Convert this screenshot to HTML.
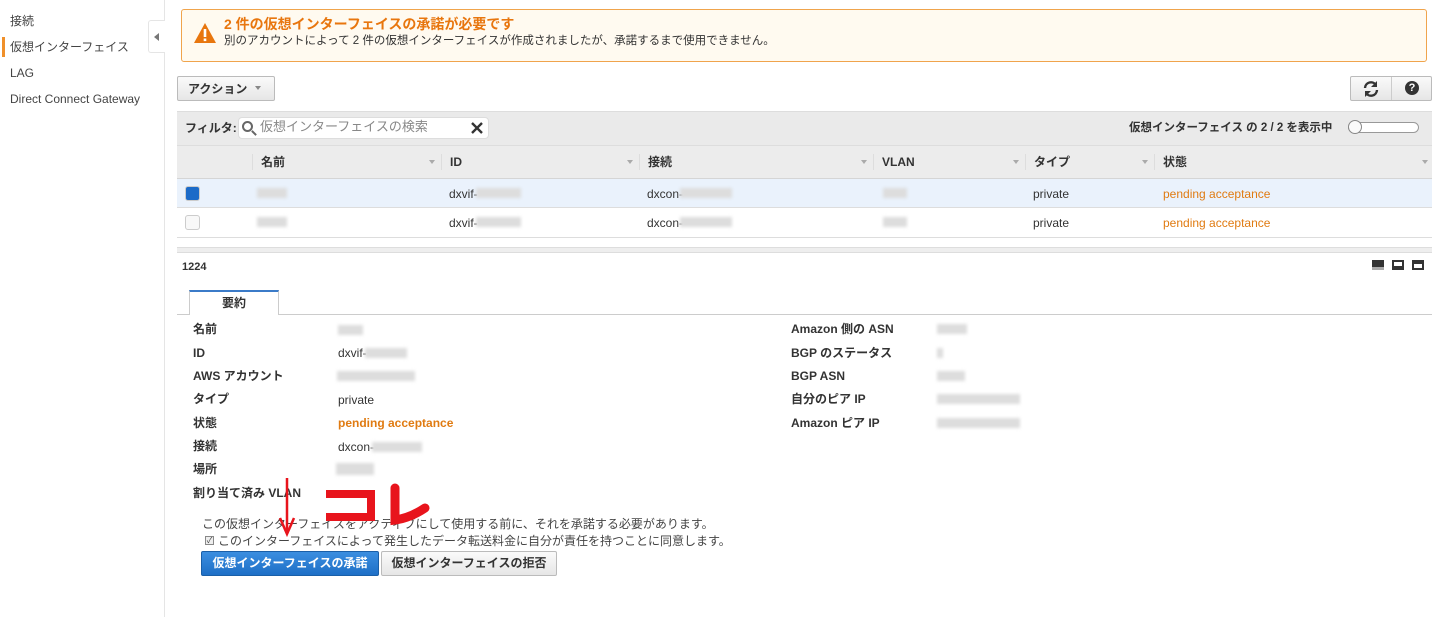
<!DOCTYPE html><html><head><meta charset="utf-8"><style>
*{box-sizing:border-box;margin:0;padding:0}
body{width:1440px;height:617px;background:#fff;font-family:"Liberation Sans","Noto Sans CJK JP",sans-serif;font-size:12px;line-height:14px;color:#444;position:relative;overflow:hidden}
.a{position:absolute;line-height:14px}
.nav{font-size:12px;color:#444}
.b{font-weight:bold;color:#333}
.blur{position:absolute;background:#ddd;height:10px;filter:blur(1.5px)}
.hd{color:#333;font-weight:bold}
.caret{position:absolute;width:0;height:0;border-left:3px solid transparent;border-right:3px solid transparent;border-top:4px solid #aaa}
.sep{position:absolute;width:1px;height:16px;background:#ddd;top:154px}
.or{color:#e07b12}
.btn{position:absolute;border:1px solid #bbb;border-radius:2px;background:linear-gradient(#fafafa,#e6e6e6)}
</style></head><body>
<div class="a" style="left:164px;top:0;width:1px;height:617px;background:#e5e5e5"></div>
<div class="a nav" style="left:10px;top:14px">接続</div>
<div class="a" style="left:2px;top:37px;width:3px;height:20px;background:#f0902a"></div>
<div class="a nav" style="left:10px;top:40px">仮想インターフェイス</div>
<div class="a nav" style="left:10px;top:66px">LAG</div>
<div class="a nav" style="left:10px;top:92px">Direct Connect Gateway</div>
<div class="a" style="left:148px;top:20px;width:17px;height:33px;border:1px solid #e5e5e5;border-right:none;border-radius:3px 0 0 3px;background:#fff"></div>
<div class="a" style="left:154px;top:33px;border-top:4px solid transparent;border-bottom:4px solid transparent;border-right:5px solid #777"></div>

<div class="a" style="left:181px;top:9px;width:1246px;height:53px;border:1px solid #f0a44c;border-radius:3px;background:#fffaf0"></div>
<svg class="a" style="left:193px;top:22px" width="24" height="22"><path d="M12 1L23 21H1Z" fill="#e8760e"/><rect x="10.7" y="7" width="2.6" height="8" fill="#fff"/><rect x="10.7" y="16.5" width="2.6" height="2.6" fill="#fff"/></svg>
<div class="a" style="left:224px;top:16px;font-size:14px;line-height:16px;font-weight:bold;color:#e8760e">2 件の仮想インターフェイスの承諾が必要です</div>
<div class="a" style="left:224px;top:34px;font-size:11.5px;color:#333">別のアカウントによって 2 件の仮想インターフェイスが作成されましたが、承諾するまで使用できません。</div>

<div class="btn" style="left:177px;top:76px;width:98px;height:25px"></div>
<div class="a b" style="left:188px;top:82px">アクション</div>
<div class="caret" style="left:255px;top:86px;border-top-color:#888"></div>
<div class="btn" style="left:1350px;top:76px;width:82px;height:25px"></div>
<div class="a" style="left:1391px;top:77px;width:1px;height:23px;background:#ccc"></div>
<svg class="a" style="left:1362px;top:80px" width="18" height="18" viewBox="0 0 18 18"><path d="M3 8A6 6 0 0 1 14 5" stroke="#333" stroke-width="2.4" fill="none"/><path d="M15 1V7H9Z" fill="#333"/><path d="M15 10A6 6 0 0 1 4 13" stroke="#333" stroke-width="2.4" fill="none"/><path d="M3 17V11H9Z" fill="#333"/></svg>
<div class="a" style="left:1405px;top:81px;width:14px;height:14px;border-radius:50%;background:#333;color:#fff;font-size:11px;font-weight:bold;text-align:center;line-height:14px">?</div>

<div class="a" style="left:177px;top:111px;width:1255px;height:34px;background:#eaeaea;border-top:1px solid #ddd"></div>
<div class="a b" style="left:185px;top:121px">フィルタ:</div>
<div class="a" style="left:238px;top:117px;width:251px;height:22px;background:#fff;border:1px solid #ddd;border-radius:4px"></div>
<div class="a" style="left:242px;top:121px;width:11px;height:11px;border:2px solid #666;border-radius:50%"></div>
<div class="a" style="left:251px;top:132px;width:6px;height:2px;background:#666;transform:rotate(45deg)"></div>
<div class="a" style="left:260px;top:120px;font-size:13px;color:#888">仮想インターフェイスの検索</div>
<svg class="a" style="left:471px;top:122px" width="12" height="12"><path d="M1 1L11 11M11 1L1 11" stroke="#333" stroke-width="2.4"/></svg>
<div class="a b" style="left:1129px;top:121px;font-size:11.5px">仮想インターフェイス の 2 / 2 を表示中</div>
<div class="a" style="left:1348px;top:122px;width:71px;height:11px;border:1px solid #999;border-radius:6px;background:#fff"></div>
<div class="a" style="left:1348px;top:120px;width:14px;height:14px;border:1px solid #888;border-radius:50%;background:#fafafa"></div>

<div class="a" style="left:177px;top:145px;width:1255px;height:34px;background:#ececec;border-top:1px solid #ddd;border-bottom:1px solid #d5d5d5"></div>
<div class="sep" style="left:252px"></div><div class="sep" style="left:441px"></div><div class="sep" style="left:639px"></div><div class="sep" style="left:873px"></div><div class="sep" style="left:1025px"></div><div class="sep" style="left:1154px"></div>
<div class="a hd" style="left:261px;top:155px">名前</div>
<div class="a hd" style="left:450px;top:155px">ID</div>
<div class="a hd" style="left:648px;top:155px">接続</div>
<div class="a hd" style="left:882px;top:155px">VLAN</div>
<div class="a hd" style="left:1034px;top:155px">タイプ</div>
<div class="a hd" style="left:1163px;top:155px">状態</div>
<div class="caret" style="left:429px;top:160px"></div><div class="caret" style="left:627px;top:160px"></div><div class="caret" style="left:861px;top:160px"></div><div class="caret" style="left:1013px;top:160px"></div><div class="caret" style="left:1142px;top:160px"></div><div class="caret" style="left:1422px;top:160px"></div>

<div class="a" style="left:177px;top:179px;width:1255px;height:29px;background:#eaf2fc;border-bottom:1px solid #ddd"></div>
<div class="a" style="left:177px;top:208px;width:1255px;height:30px;border-bottom:1px solid #ddd"></div>
<div class="a" style="left:185px;top:186px;width:15px;height:15px;border-radius:3px;background:#1c6bc8;border:1px solid #ccc"></div>
<div class="a" style="left:185px;top:215px;width:15px;height:15px;border-radius:3px;background:#f8f8f8;border:1px solid #ccc"></div>
<div class="blur" style="left:257px;top:188px;width:30px"></div><div class="blur" style="left:257px;top:217px;width:30px"></div>
<div class="a" style="left:449px;top:187px;color:#333">dxvif-</div><div class="blur" style="left:476px;top:188px;width:45px"></div>
<div class="a" style="left:449px;top:216px;color:#333">dxvif-</div><div class="blur" style="left:476px;top:217px;width:45px"></div>
<div class="a" style="left:647px;top:187px;color:#333">dxcon-</div><div class="blur" style="left:680px;top:188px;width:52px"></div>
<div class="a" style="left:647px;top:216px;color:#333">dxcon-</div><div class="blur" style="left:680px;top:217px;width:52px"></div>
<div class="blur" style="left:883px;top:188px;width:24px"></div><div class="blur" style="left:883px;top:217px;width:24px"></div>
<div class="a" style="left:1033px;top:187px;color:#333">private</div><div class="a" style="left:1033px;top:216px;color:#333">private</div>
<div class="a or" style="left:1163px;top:187px">pending acceptance</div><div class="a or" style="left:1163px;top:216px">pending acceptance</div>

<div class="a" style="left:177px;top:247px;width:1255px;height:6px;background:#eee;border-top:1px solid #ddd;border-bottom:1px solid #ddd"></div>
<div class="a b" style="left:182px;top:260px;font-size:11px">1224</div>
<div class="a" style="left:1372px;top:260px;width:12px;height:10px;background:#333;border-bottom:3px solid #aaa"></div>
<div class="a" style="left:1392px;top:260px;width:12px;height:10px;border:2px solid #333;border-bottom-width:4px;background:#fff"></div>
<div class="a" style="left:1412px;top:260px;width:12px;height:10px;border:2px solid #333;border-top-width:4px;background:#fff"></div>

<div class="a" style="left:177px;top:314px;width:1255px;height:1px;background:#ccc"></div>
<div class="a" style="left:189px;top:290px;width:90px;height:25px;border:1px solid #ccc;border-top:2px solid #3b7bc8;border-bottom:none;background:#fff"></div>
<div class="a b" style="left:222px;top:296px">要約</div>

<div class="a b" style="left:193px;top:322px">名前</div><div class="blur" style="left:338px;top:325px;width:25px"></div>
<div class="a b" style="left:193px;top:346px">ID</div><div class="a" style="left:338px;top:346px;color:#333">dxvif-</div><div class="blur" style="left:365px;top:348px;width:42px"></div>
<div class="a b" style="left:193px;top:369px">AWS アカウント</div><div class="blur" style="left:337px;top:371px;width:78px"></div>
<div class="a b" style="left:193px;top:392px">タイプ</div><div class="a" style="left:338px;top:393px;color:#333">private</div>
<div class="a b" style="left:193px;top:416px">状態</div><div class="a or" style="left:338px;top:416px;font-weight:bold">pending acceptance</div>
<div class="a b" style="left:193px;top:439px">接続</div><div class="a" style="left:338px;top:440px;color:#333">dxcon-</div><div class="blur" style="left:372px;top:442px;width:50px"></div>
<div class="a b" style="left:193px;top:462px">場所</div><div class="blur" style="left:336px;top:463px;width:38px;height:12px"></div>
<div class="a b" style="left:193px;top:486px">割り当て済み VLAN</div>

<div class="a b" style="left:791px;top:322px">Amazon 側の ASN</div><div class="blur" style="left:937px;top:324px;width:30px"></div>
<div class="a b" style="left:791px;top:346px">BGP のステータス</div><div class="blur" style="left:937px;top:348px;width:6px"></div>
<div class="a b" style="left:791px;top:369px">BGP ASN</div><div class="blur" style="left:937px;top:371px;width:28px"></div>
<div class="a b" style="left:791px;top:392px">自分のピア IP</div><div class="blur" style="left:937px;top:394px;width:83px"></div>
<div class="a b" style="left:791px;top:416px">Amazon ピア IP</div><div class="blur" style="left:937px;top:418px;width:83px"></div>

<div class="a" style="left:202px;top:517px;color:#444">この仮想インターフェイスをアクティブにして使用する前に、それを承諾する必要があります。</div>
<div class="a" style="left:205px;top:536px;width:9px;height:9px;border:1px solid #888;background:#eee;font-size:8px;line-height:8px;text-align:center">✓</div>
<div class="a" style="left:218px;top:534px;color:#444">このインターフェイスによって発生したデータ転送料金に自分が責任を持つことに同意します。</div>
<div class="a" style="left:201px;top:551px;width:178px;height:25px;border:1px solid #1a5fa8;border-radius:2px;background:linear-gradient(#3b8ee0,#1e6fc6);color:#fff;font-weight:bold;text-align:center;line-height:23px">仮想インターフェイスの承諾</div>
<div class="btn" style="left:381px;top:551px;width:176px;height:25px;text-align:center;line-height:23px;font-weight:bold;color:#333">仮想インターフェイスの拒否</div>

<svg class="a" style="left:260px;top:470px" width="200" height="80">
<path d="M27 8V62" stroke="#e8141c" stroke-width="2.5"/><path d="M20 48L27 64L34 48" stroke="#e8141c" stroke-width="2.5" fill="none"/>
<path d="M66 24H111V47H66" stroke="#e8141c" stroke-width="8" fill="none"/>
<path d="M135 18V50Q150 48 165 38" stroke="#e8141c" stroke-width="9" fill="none" stroke-linecap="round"/>
</svg>
</body></html>
